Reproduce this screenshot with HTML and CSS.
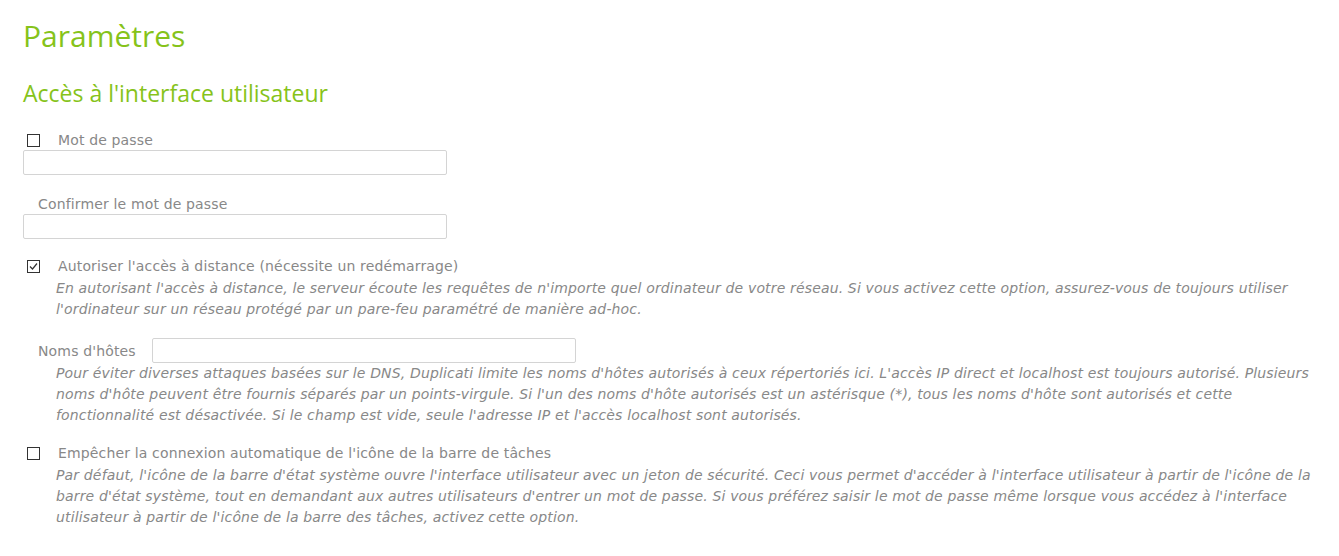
FILE: index.html
```html
<!DOCTYPE html>
<html lang="fr">
<head>
  <meta charset="UTF-8" />
  <meta name="viewport" content="width=device-width, initial-scale=1.0"/>
  <title>Paramètres</title>
  <link rel="stylesheet" href="styles.css">
</head>
<body>
  <h1>Paramètres</h1>

  <h2>Accès à l'interface utilisateur</h2>

  <div class="check-row first">
    <span class="box"></span>
    <label>Mot de passe</label>
  </div>
  <input type="password" class="field" />

  <label class="sub-label">Confirmer le mot de passe</label>
  <input type="password" class="field" />

  <div class="check-row">
    <span class="box">
      <svg width="9" height="9" viewBox="0 0 9 9"><path d="M1 4.5 L3.5 7 L8 1.5" fill="none" stroke="#333" stroke-width="1.2"/></svg>
    </span>
    <label>Autoriser l'accès à distance (nécessite un redémarrage)</label>
  </div>
  <p class="hint">En autorisant l'accès à distance, le serveur écoute les requêtes de n'importe quel ordinateur de votre réseau. Si vous activez cette option, assurez-vous de toujours utiliser l'ordinateur sur un réseau protégé par un pare-feu paramétré de manière ad-hoc.</p>

  <div class="host-row">
    <label>Noms d'hôtes</label>
    <input type="text" class="field" />
  </div>
  <p class="hint tight">Pour éviter diverses attaques basées sur le DNS, Duplicati limite les noms d'hôtes autorisés à ceux répertoriés ici. L'accès IP direct et localhost est toujours autorisé. Plusieurs noms d'hôte peuvent être fournis séparés par un points-virgule. Si l'un des noms d'hôte autorisés est un astérisque (*), tous les noms d'hôte sont autorisés et cette fonctionnalité est désactivée. Si le champ est vide, seule l'adresse IP et l'accès localhost sont autorisés.</p>

  <div class="check-row">
    <span class="box"></span>
    <label>Empêcher la connexion automatique de l'icône de la barre de tâches</label>
  </div>
  <p class="hint">Par défaut, l'icône de la barre d'état système ouvre l'interface utilisateur avec un jeton de sécurité. Ceci vous permet d'accéder à l'interface utilisateur à partir de l'icône de la barre d'état système, tout en demandant aux autres utilisateurs d'entrer un mot de passe. Si vous préférez saisir le mot de passe même lorsque vous accédez à l'interface utilisateur à partir de l'icône de la barre des tâches, activez cette option.</p>
</body>
</html>
```

FILE: styles.css
```css
body {
  margin: 0;
  padding: 0 18px 0 23px;
  font-family: "DejaVu Sans", sans-serif;
  font-size: 14px;
  letter-spacing: 0.15px;
  color: #888;
  background: #fff;
}
h1 {
  font-family: "Open Sans", sans-serif;
  font-weight: 400;
  font-size: 30px;
  letter-spacing: 0;
  color: #86c31a;
  margin: 0;
  padding-top: 16px;
  line-height: 40px;
}
h2 {
  font-family: "Open Sans", sans-serif;
  font-weight: 400;
  font-size: 23px;
  letter-spacing: 0;
  color: #86c31a;
  margin: 22px 0 0;
  line-height: 30px;
}
.check-row {
  display: flex;
  align-items: center;
  margin-top: 18px;
  height: 18px;
}
.check-row.first {
  margin-top: 23px;
}
.box {
  width: 11px;
  height: 11px;
  border: 1px solid #333;
  margin-left: 4px;
  margin-right: 18px;
  display: flex;
  align-items: center;
  justify-content: center;
}
.field {
  display: block;
  box-sizing: border-box;
  width: 424px;
  height: 25px;
  border: 1px solid #d4d4d4;
  border-radius: 2px;
  margin: 1px 0 0;
}
.sub-label {
  display: block;
  margin: 20px 0 0 15px;
  line-height: 18px;
}
.hint {
  font-style: italic;
  margin: 3px 0 0 33px;
  line-height: 21px;
}
.hint.tight {
  margin-top: 0;
}
.host-row {
  display: flex;
  align-items: center;
  margin-top: 18px;
  margin-left: 15px;
}
.host-row label {
  width: 114px;
}
.host-row .field {
  margin: 0;
}
```
